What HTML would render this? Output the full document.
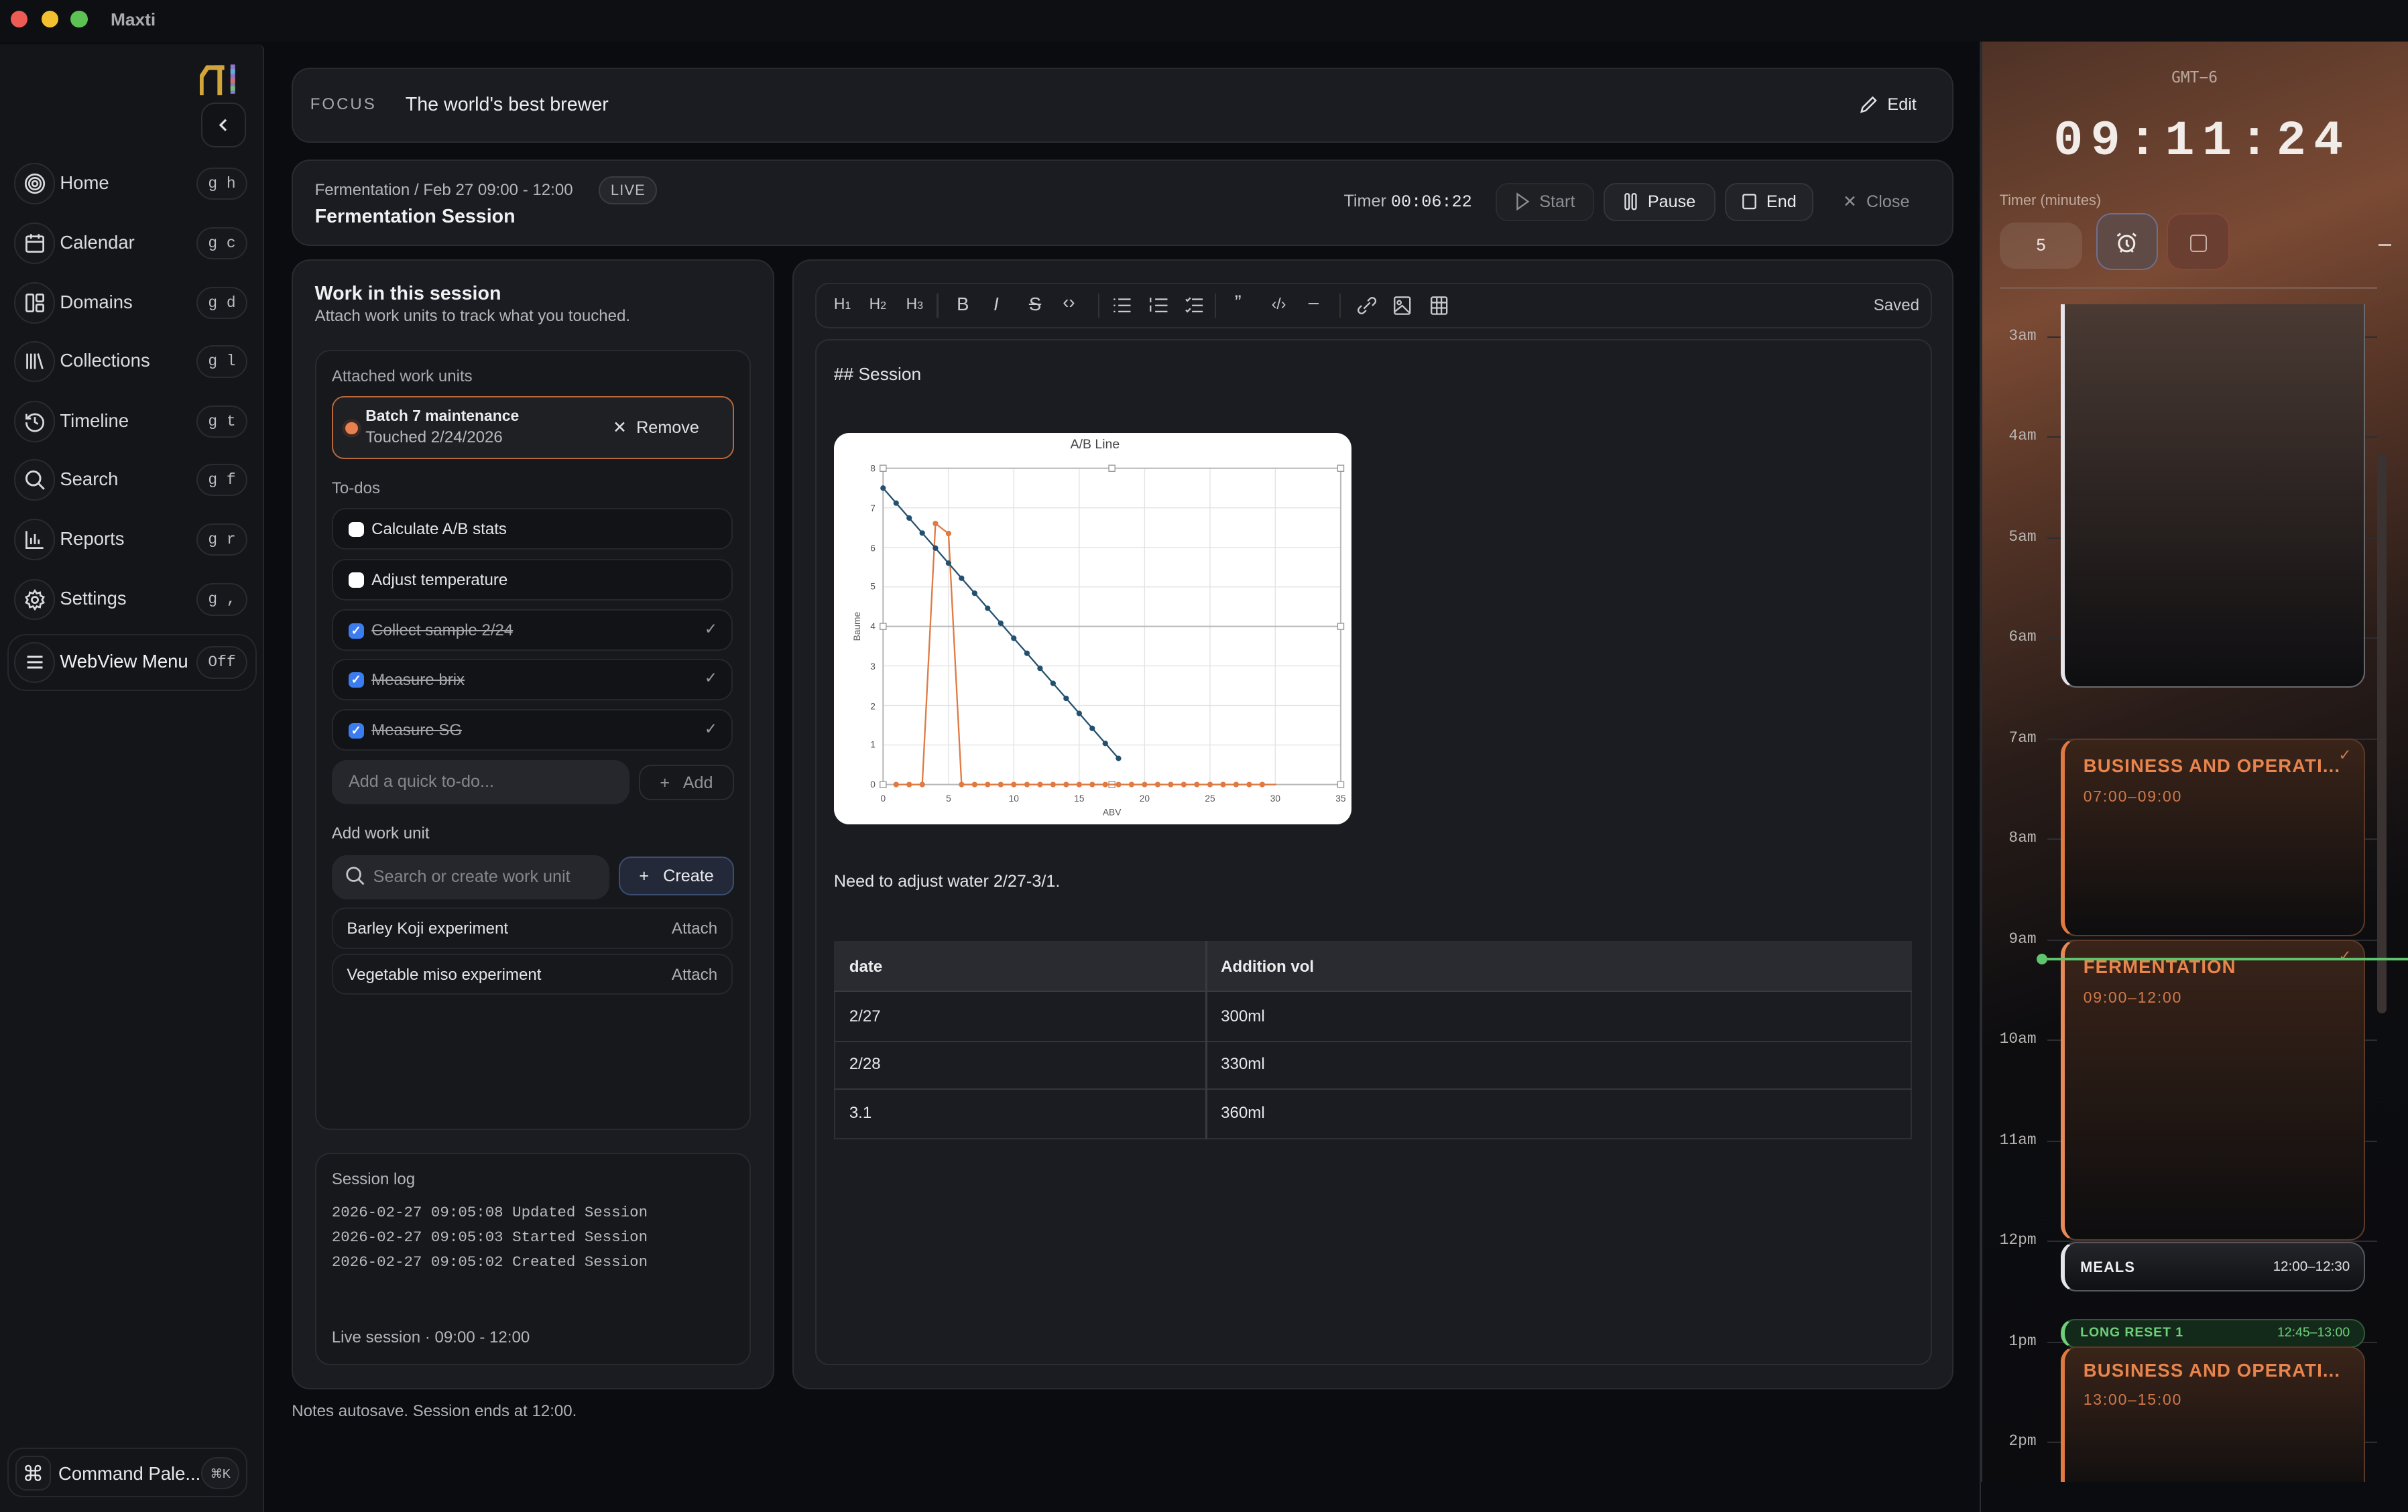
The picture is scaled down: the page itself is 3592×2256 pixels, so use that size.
<!DOCTYPE html>
<html><head><meta charset="utf-8"><style>
*{box-sizing:border-box;margin:0;padding:0}
html,body{width:3592px;height:2256px;overflow:hidden;background:#0b0c0f}
#r{width:1568px;height:985px;zoom:2.2908;position:relative;background:#0b0c0f;font-family:"Liberation Sans",sans-serif;color:#e7e7ea;font-size:11px;overflow:hidden}
.a{position:absolute}
.card{position:absolute;background:#1b1c21;border:1px solid #2a2b31;border-radius:12px}
.mono{font-family:"Liberation Mono",monospace}
.muted{color:#9b9ca2}
.nav{position:absolute;left:9px;width:152px;height:30px}
.nav .ic{position:absolute;left:0;top:1px;width:27px;height:27px;border:1px solid #2a2b30;border-radius:50%;background:#17181c;display:flex;align-items:center;justify-content:center}
.nav .lb{position:absolute;left:30px;top:7px;font-size:12px;color:#dcdce0}
.nav .kb{position:absolute;right:0;top:4px;width:33px;height:21px;border:1px solid #2a2b30;border-radius:11px;font-family:"Liberation Mono",monospace;font-size:10px;color:#bcbcc2;text-align:center;line-height:20px;background:#17181c}
svg{display:block}
.row{position:absolute;left:216px;width:261px;height:27px;border:1px solid #26272c;border-radius:9px;background:#121317}
.cb{position:absolute;left:10px;top:8px;width:10px;height:10px;border-radius:3px;background:#fff;color:#fff;font-size:8px;line-height:10px;text-align:center;font-weight:bold}
.cbd{background:#3b7cf0}
.rt{position:absolute;left:25px;top:7px;font-size:10.5px;color:#e5e5e8}
.done{color:#a5a5aa;text-decoration:line-through}
.btn{position:absolute;border:1px solid #33343a;border-radius:8px;background:#222328;font-size:11px;display:flex;align-items:center;justify-content:center;gap:6px}
.tb{position:absolute;top:192px;font-size:10px;color:#c9c9ce}
.hr{position:absolute;left:1308px;font-family:"Liberation Mono",monospace;font-size:10px;color:#b8b5b2}
.hl{position:absolute;left:1333px;width:215px;height:1px;background:#2d2d31}
.ev{position:absolute;left:1342px;width:198px;border:1px solid #5a3a28;border-left:3px solid #e07a40;border-radius:10px;background:linear-gradient(#3a2419,#0e0d0f)}
.evt{position:absolute;left:12px;font-weight:bold;color:#e8844c;font-size:12px;letter-spacing:.5px;white-space:nowrap}
.evs{position:absolute;left:12px;color:#d2784a;font-size:10px;letter-spacing:.8px}
</style></head><body><div id="r">
<div class="a" style="left:0;top:0;width:1568px;height:27px;background:#0e0f12"></div>
<div class="a" style="left:7px;top:7px;width:11px;height:11px;border-radius:50%;background:#ee5b55"></div>
<div class="a" style="left:27px;top:7px;width:11px;height:11px;border-radius:50%;background:#f3c02f"></div>
<div class="a" style="left:46px;top:7px;width:11px;height:11px;border-radius:50%;background:#5bc253"></div>
<div class="a" style="left:72px;top:6px;font-size:11.5px;color:#a9a9ae;font-weight:bold">Maxti</div>
<div class="a" style="left:0;top:29px;width:172px;height:956px;background:#141519;border-right:1px solid #26272c;border-top-right-radius:4px"></div>
<svg class="a" style="left:130px;top:41px" width="30" height="22" viewBox="0 0 30 22"><path d="M1 21V9l4-6h10" stroke="#d2a53a" stroke-width="3" fill="none"/><path d="M10 3h6M13 3v18" stroke="#d2a53a" stroke-width="3" fill="none"/><rect x="20" y="1" width="3" height="19" fill="#8c7ad0"/><rect x="20" y="4" width="3" height="3" fill="#5fb0d0"/><rect x="20" y="10" width="3" height="3" fill="#d07070"/><rect x="20" y="15" width="3" height="3" fill="#70c070"/></svg>
<div class="a" style="left:131px;top:67px;width:29px;height:29px;border:1px solid #2c2d32;border-radius:9px;background:#121317"></div>
<svg class="a" style="left:140px;top:76px" width="11" height="11" viewBox="0 0 11 11"><path d="M7 2L3.5 5.5 7 9" stroke="#e0e0e4" stroke-width="1.4" fill="none"/></svg>

<div class="nav" style="top:105px"><div class="ic"><svg width="14" height="14" viewBox="0 0 14 14" fill="none" stroke="#d8d8dc" stroke-width="1.2"><circle cx="7" cy="7" r="6"/><circle cx="7" cy="7" r="3.8"/><circle cx="7" cy="7" r="1.7"/></svg></div><div class="lb">Home</div><div class="kb">g h</div></div>
<div class="nav" style="top:144px"><div class="ic"><svg width="14" height="14" viewBox="0 0 14 14" fill="none" stroke="#d8d8dc" stroke-width="1.2"><rect x="1.5" y="2.5" width="11" height="10" rx="1"/><path d="M1.5 6h11M4.5 1v3M9.5 1v3"/></svg></div><div class="lb">Calendar</div><div class="kb">g c</div></div>
<div class="nav" style="top:183px"><div class="ic"><svg width="14" height="14" viewBox="0 0 14 14" fill="none" stroke="#d8d8dc" stroke-width="1.2"><rect x="1.5" y="1.5" width="4.5" height="11" rx=".8"/><rect x="8" y="1.5" width="4.5" height="4.5" rx=".8"/><rect x="8" y="8" width="4.5" height="4.5" rx=".8"/></svg></div><div class="lb">Domains</div><div class="kb">g d</div></div>
<div class="nav" style="top:221px"><div class="ic"><svg width="14" height="14" viewBox="0 0 14 14" fill="none" stroke="#d8d8dc" stroke-width="1.2"><path d="M2 2v10M4.5 2v10M7 2v10M9 2l3 10"/></svg></div><div class="lb">Collections</div><div class="kb">g l</div></div>
<div class="nav" style="top:260px"><div class="ic"><svg width="14" height="14" viewBox="0 0 14 14" fill="none" stroke="#d8d8dc" stroke-width="1.2"><path d="M2.2 5A5.5 5.5 0 1 1 1.5 7.5M1.5 2v3h3M7 4v3.3l2 1.3"/></svg></div><div class="lb">Timeline</div><div class="kb">g t</div></div>
<div class="nav" style="top:298px"><div class="ic"><svg width="14" height="14" viewBox="0 0 14 14" fill="none" stroke="#d8d8dc" stroke-width="1.3"><circle cx="6" cy="6" r="4.5"/><path d="M9.5 9.5L13 13"/></svg></div><div class="lb">Search</div><div class="kb">g f</div></div>
<div class="nav" style="top:337px"><div class="ic"><svg width="14" height="14" viewBox="0 0 14 14" fill="none" stroke="#d8d8dc" stroke-width="1.2"><path d="M1.5 1.5v11h11M4.5 10V6M7 10V3.5M9.5 10V7"/></svg></div><div class="lb">Reports</div><div class="kb">g r</div></div>
<div class="nav" style="top:376px"><div class="ic"><svg width="14" height="14" viewBox="0 0 14 14" fill="none" stroke="#d8d8dc" stroke-width="1.2"><circle cx="7" cy="7" r="2"/><path d="M7 1l1.2 1.8 2.1-.6.4 2.1 2 .9-1 1.8 1 1.8-2 .9-.4 2.1-2.1-.6L7 13l-1.2-1.8-2.1.6-.4-2.1-2-.9 1-1.8-1-1.8 2-.9.4-2.1 2.1.6z"/></svg></div><div class="lb">Settings</div><div class="kb">g ,</div></div>
<div class="a" style="left:5px;top:413px;width:162px;height:37px;border:1px solid #26272c;border-radius:12px"></div>
<div class="nav" style="top:417px"><div class="ic"><svg width="14" height="14" viewBox="0 0 14 14" fill="none" stroke="#e0e0e4" stroke-width="1.3"><path d="M2 3.5h10M2 7h10M2 10.5h10"/></svg></div><div class="lb" style="color:#f0f0f2">WebView Menu</div><div class="kb">Off</div></div>
<div class="a" style="left:5px;top:943px;width:156px;height:32px;border:1px solid #26272c;border-radius:10px"></div>
<div class="a" style="left:10px;top:948px;width:23px;height:23px;border:1px solid #2a2b30;border-radius:7px;background:#17181c;text-align:center;line-height:22px;font-size:14px;color:#e6e6ea">⌘</div>
<div class="a" style="left:38px;top:953px;font-size:12px;color:#e6e6ea">Command Pale...</div>
<div class="a" style="left:131px;top:949px;width:25px;height:21px;border:1px solid #2a2b30;border-radius:11px;background:#1b1c20;font-size:8px;color:#bcbcc2;text-align:center;line-height:20px">⌘K</div>

<div class="card" style="left:190px;top:44px;width:1082px;height:49px"></div>
<div class="a" style="left:202px;top:62px;font-size:10.5px;letter-spacing:1.3px;color:#a7a8ad">FOCUS</div>
<div class="a" style="left:264px;top:61px;font-size:12.5px;color:#ececef">The world's best brewer</div>
<svg class="a" style="left:1211px;top:62px" width="12" height="12" viewBox="0 0 12 12" fill="none" stroke="#e0e0e4" stroke-width="1.1"><path d="M8.5 1.5l2 2L4 10l-2.8.8L2 8z"/></svg>
<div class="a" style="left:1229px;top:62px;font-size:11px">Edit</div>

<div class="card" style="left:190px;top:104px;width:1082px;height:56px"></div>
<div class="a" style="left:205px;top:118px;font-size:10.5px;color:#b5b6bb">Fermentation / Feb 27 09:00 - 12:00</div>
<div class="a" style="left:390px;top:115px;width:38px;height:18px;border:1px solid #3a3b40;border-radius:9px;background:#26272c;font-size:9.5px;color:#bcbdc2;text-align:center;line-height:17px;letter-spacing:.5px">LIVE</div>
<div class="a" style="left:205px;top:134px;font-size:12.5px;font-weight:bold;color:#f0f0f2">Fermentation Session</div>
<div class="a" style="left:875px;top:125px;font-size:11px;color:#bdbdc2">Timer <span class="mono" style="color:#e8e8ea">00:06:22</span></div>
<div class="btn" style="left:974px;top:119px;width:64px;height:25px;color:#8e8f94;background:#1f2024;border-color:#2a2b30"><svg width="10" height="12" viewBox="0 0 10 12" fill="none" stroke="#8e8f94"><path d="M1.5 1v10L8.5 6z"/></svg>Start</div>
<div class="btn" style="left:1044px;top:119px;width:73px;height:25px;color:#ececee"><svg width="10" height="12" viewBox="0 0 10 12" fill="none" stroke="#e0e0e4"><rect x="1.5" y="1" width="2.5" height="10" rx="1"/><rect x="6" y="1" width="2.5" height="10" rx="1"/></svg>Pause</div>
<div class="btn" style="left:1123px;top:119px;width:58px;height:25px;color:#ececee"><svg width="10" height="12" viewBox="0 0 10 12" fill="none" stroke="#e0e0e4"><rect x="1" y="1.5" width="8" height="9" rx="1"/></svg>End</div>
<div class="a" style="left:1200px;top:125px;font-size:11px;color:#8e8f94">✕&nbsp;&nbsp;Close</div>

<div class="card" style="left:190px;top:169px;width:314px;height:736px"></div>
<div class="a" style="left:205px;top:184px;font-size:12.5px;font-weight:bold;color:#f0f0f2">Work in this session</div>
<div class="a" style="left:205px;top:200px;font-size:10.5px;color:#b5b6bb">Attach work units to track what you touched.</div>
<div class="a" style="left:205px;top:228px;width:284px;height:508px;border:1px solid #292a2f;border-radius:10px;background:#17181c"></div>
<div class="a" style="left:216px;top:239px;font-size:10.5px;color:#a9aaaf">Attached work units</div>
<div class="a" style="left:216px;top:258px;width:262px;height:41px;border:1px solid #b8683c;border-radius:8px;background:#1f2024"></div>
<div class="a" style="left:225px;top:275px;width:8px;height:8px;border-radius:50%;background:#e88050;box-shadow:0 0 0 2px #3a2a24"></div>
<div class="a" style="left:238px;top:265px;font-size:10px;font-weight:bold;color:#ececef">Batch 7 maintenance</div>
<div class="a" style="left:238px;top:279px;font-size:10.5px;color:#b9b9be">Touched 2/24/2026</div>
<div class="a" style="left:399px;top:272px;font-size:11px;color:#e0e0e4">✕&nbsp;&nbsp;Remove</div>
<div class="a" style="left:216px;top:312px;font-size:10.5px;color:#a9aaaf">To-dos</div>
<div class="row" style="top:331px"><div class="cb"></div><div class="rt">Calculate A/B stats</div></div>
<div class="row" style="top:364px"><div class="cb"></div><div class="rt">Adjust temperature</div></div>
<div class="row" style="top:397px"><div class="cb cbd">✓</div><div class="rt done">Collect sample 2/24</div><div class="a muted" style="right:9px;top:6px;font-size:10px">✓</div></div>
<div class="row" style="top:429px"><div class="cb cbd">✓</div><div class="rt done">Measure brix</div><div class="a muted" style="right:9px;top:6px;font-size:10px">✓</div></div>
<div class="row" style="top:462px"><div class="cb cbd">✓</div><div class="rt done">Measure SG</div><div class="a muted" style="right:9px;top:6px;font-size:10px">✓</div></div>
<div class="a" style="left:216px;top:495px;width:194px;height:29px;border-radius:10px;background:#26272c;font-size:11px;color:#85868b;padding:8px 11px">Add a quick to-do...</div>
<div class="a" style="left:416px;top:498px;width:62px;height:23px;border:1px solid #2c2d32;border-radius:8px;font-size:11px;color:#909196;text-align:center;line-height:22px">+&nbsp;&nbsp; Add</div>
<div class="a" style="left:216px;top:537px;font-size:10.5px;color:#c2c3c7">Add work unit</div>
<div class="a" style="left:216px;top:557px;width:181px;height:29px;border-radius:10px;background:#26272c;font-size:11px;color:#85868b;padding:8px 0 0 27px;white-space:nowrap;overflow:hidden">Search or create work unit</div>
<svg class="a" style="left:225px;top:564px" width="13" height="13" viewBox="0 0 13 13" fill="none" stroke="#c5c5ca" stroke-width="1.2"><circle cx="5.5" cy="5.5" r="4.3"/><path d="M8.7 8.7L12 12"/></svg>
<div class="a" style="left:403px;top:558px;width:75px;height:25px;border:1px solid #3c4d72;border-radius:8px;background:#232938;font-size:11px;color:#ececef;text-align:center;line-height:24px">+&nbsp;&nbsp; Create</div>
<div class="row" style="top:591px;background:#17181c"><div class="rt" style="left:9px;font-size:10.5px">Barley Koji experiment</div><div class="a muted" style="right:9px;top:7px;font-size:10.5px;color:#b0b1b6">Attach</div></div>
<div class="row" style="top:621px;background:#17181c"><div class="rt" style="left:9px;font-size:10.5px">Vegetable miso experiment</div><div class="a muted" style="right:9px;top:7px;font-size:10.5px;color:#b0b1b6">Attach</div></div>
<div class="a" style="left:205px;top:751px;width:284px;height:138px;border:1px solid #292a2f;border-radius:10px;background:#17181c"></div>
<div class="a" style="left:216px;top:762px;font-size:10.5px;color:#b5b6bb">Session log</div>
<div class="a mono" style="left:216px;top:782px;font-size:9.8px;line-height:16px;color:#b9b9be">2026-02-27 09:05:08 Updated Session<br>2026-02-27 09:05:03 Started Session<br>2026-02-27 09:05:02 Created Session</div>
<div class="a" style="left:216px;top:865px;font-size:10.5px;color:#b5b6bb">Live session · 09:00 - 12:00</div>
<div class="a" style="left:190px;top:913px;font-size:10.5px;color:#b0b1b6">Notes autosave. Session ends at 12:00.</div>

<div class="card" style="left:516px;top:169px;width:756px;height:736px"></div>
<div class="a" style="left:531px;top:184px;width:727px;height:30px;border:1px solid #2c2d32;border-radius:9px"></div>
<div class="tb" style="left:543px">H<small style="font-size:7px">1</small></div>
<div class="tb" style="left:566px">H<small style="font-size:7px">2</small></div>
<div class="tb" style="left:590px">H<small style="font-size:7px">3</small></div>
<div class="a" style="left:610px;top:191px;width:1px;height:16px;background:#333"></div>
<div class="tb" style="left:623px;font-size:12px;top:191px">B</div>
<div class="tb" style="left:647px;font-size:12px;top:191px;font-style:italic">I</div>
<div class="tb" style="left:670px;font-size:12px;top:191px;text-decoration:line-through">S</div>
<div class="tb" style="left:692px;font-size:12px;top:190px">‹›</div>
<div class="a" style="left:715px;top:191px;width:1px;height:16px;background:#333"></div>
<svg class="a" style="left:724px;top:193px" width="60" height="12" viewBox="0 0 60 12" fill="none" stroke="#c9c9ce" stroke-width="1"><path d="M4 2h8M4 6h8M4 10h8M1 2h1M1 6h1M1 10h1M28 2h8M28 6h8M28 10h8M25 1v3M25 6v4M52 2h7M52 6h7M52 10h7M48 2l1 1 2-2M48 9l1 1 2-2"/></svg>
<div class="a" style="left:791px;top:191px;width:1px;height:16px;background:#333"></div>
<div class="tb" style="left:804px;font-size:13px;top:190px">”</div>
<div class="tb" style="left:828px;top:192px">‹/›</div>
<div class="tb" style="left:852px;top:190px;font-size:12px">–</div>
<div class="a" style="left:872px;top:191px;width:1px;height:16px;background:#333"></div>
<svg class="a" style="left:883px;top:192px" width="60" height="14" viewBox="0 0 60 14" fill="none" stroke="#c9c9ce" stroke-width="1"><path d="M5 9l4-4M3.5 7L2 8.5a2.1 2.1 0 003 3L6.5 10M7.5 4L9 2.5a2.1 2.1 0 013 3L10.5 7"/><rect x="25" y="1.5" width="10" height="11" rx="1"/><circle cx="28" cy="5" r="1.2"/><path d="M25 11l5-4 5 5"/><rect x="49" y="1.5" width="10" height="11" rx="1"/><path d="M49 5h10M49 8.5h10M52.5 1.5v11M55.5 1.5v11"/></svg>
<div class="a" style="left:1220px;top:193px;font-size:10.5px;color:#c9c9ce">Saved</div>
<div class="a" style="left:531px;top:221px;width:727px;height:668px;border:1px solid #2c2d32;border-radius:9px"></div>
<div class="a" style="left:543px;top:237px;font-size:11.5px;color:#e4e4e8">## Session</div>
<svg class="a" style="left:543px;top:282px" width="337" height="255" viewBox="0 0 337 255">
<rect width="337" height="255" rx="10" fill="#fff"/>
<text x="170" y="10" font-size="8.5" fill="#444" text-anchor="middle" font-family="Liberation Sans">A/B Line</text>
<g stroke="#e3e3e3" stroke-width=".6"><path d="M74.6 23V229M117.1 23V229M159.7 23V229M202.3 23V229M244.9 23V229M287.4 23V229M32 203.25H330M32 177.5H330M32 151.75H330M32 100.25H330M32 74.5H330M32 48.75H330"/></g>
<g stroke="#b8b8b8" stroke-width=".9" fill="none"><rect x="32" y="23" width="298" height="206"/><path d="M32 126H330"/></g>
<g fill="#fff" stroke="#999" stroke-width=".6"><rect x="30" y="21" width="4" height="4"/><rect x="179" y="21" width="4" height="4"/><rect x="328" y="21" width="4" height="4"/><rect x="30" y="124" width="4" height="4"/><rect x="328" y="124" width="4" height="4"/><rect x="30" y="227" width="4" height="4"/><rect x="179" y="227" width="4" height="4"/><rect x="328" y="227" width="4" height="4"/></g>
<g font-size="6" fill="#555" font-family="Liberation Sans" text-anchor="end"><text x="27" y="231">0</text><text x="27" y="205">1</text><text x="27" y="180">2</text><text x="27" y="154">3</text><text x="27" y="128">4</text><text x="27" y="102">5</text><text x="27" y="77">6</text><text x="27" y="51">7</text><text x="27" y="25">8</text></g>
<g font-size="6" fill="#555" font-family="Liberation Sans" text-anchor="middle"><text x="32" y="240">0</text><text x="74.6" y="240">5</text><text x="117.1" y="240">10</text><text x="159.7" y="240">15</text><text x="202.3" y="240">20</text><text x="244.9" y="240">25</text><text x="287.4" y="240">30</text><text x="330" y="240">35</text><text x="181" y="249">ABV</text></g>
<text x="17" y="126" font-size="6" fill="#555" font-family="Liberation Sans" text-anchor="middle" transform="rotate(-90 17 126)">Baume</text>
<polyline fill="none" stroke="#e07a42" stroke-width="1" points="40.5,229 49,229 57.5,229 66.1,59 74.6,65.5 83.1,229 288,229"/>
<g fill="#e07a42"><circle cx="40.5" cy="229" r="1.8"/><circle cx="49" cy="229" r="1.8"/><circle cx="57.5" cy="229" r="1.8"/><circle cx="66.1" cy="59" r="1.8"/><circle cx="74.6" cy="65.5" r="1.8"/><circle cx="83.1" cy="229" r="1.8"/><circle cx="91.6" cy="229" r="1.8"/><circle cx="100.1" cy="229" r="1.8"/><circle cx="108.6" cy="229" r="1.8"/><circle cx="117.1" cy="229" r="1.8"/><circle cx="125.7" cy="229" r="1.8"/><circle cx="134.2" cy="229" r="1.8"/><circle cx="142.7" cy="229" r="1.8"/><circle cx="151.2" cy="229" r="1.8"/><circle cx="159.7" cy="229" r="1.8"/><circle cx="168.2" cy="229" r="1.8"/><circle cx="176.7" cy="229" r="1.8"/><circle cx="185.3" cy="229" r="1.8"/><circle cx="193.8" cy="229" r="1.8"/><circle cx="202.3" cy="229" r="1.8"/><circle cx="210.8" cy="229" r="1.8"/><circle cx="219.3" cy="229" r="1.8"/><circle cx="227.8" cy="229" r="1.8"/><circle cx="236.3" cy="229" r="1.8"/><circle cx="244.9" cy="229" r="1.8"/><circle cx="253.4" cy="229" r="1.8"/><circle cx="261.9" cy="229" r="1.8"/><circle cx="270.4" cy="229" r="1.8"/><circle cx="278.9" cy="229" r="1.8"/></g>
<polyline fill="none" stroke="#23506e" stroke-width="1" points="32,35.9 185.3,212"/>
<g fill="#23506e"><circle cx="32" cy="35.9" r="1.8"/><circle cx="40.5" cy="45.7" r="1.8"/><circle cx="49" cy="55.4" r="1.8"/><circle cx="57.5" cy="65.2" r="1.8"/><circle cx="66.1" cy="75" r="1.8"/><circle cx="74.6" cy="84.8" r="1.8"/><circle cx="83.1" cy="94.6" r="1.8"/><circle cx="91.6" cy="104.4" r="1.8"/><circle cx="100.1" cy="114.2" r="1.8"/><circle cx="108.6" cy="123.9" r="1.8"/><circle cx="117.1" cy="133.7" r="1.8"/><circle cx="125.7" cy="143.5" r="1.8"/><circle cx="134.2" cy="153.3" r="1.8"/><circle cx="142.7" cy="163.1" r="1.8"/><circle cx="151.2" cy="172.9" r="1.8"/><circle cx="159.7" cy="182.7" r="1.8"/><circle cx="168.2" cy="192.4" r="1.8"/><circle cx="176.7" cy="202.2" r="1.8"/><circle cx="185.3" cy="212" r="1.8"/></g>
</svg>
<div class="a" style="left:543px;top:568px;font-size:11px;color:#e4e4e8">Need to adjust water 2/27-3/1.</div>
<div class="a" style="left:543px;top:613px;width:702px;height:129px;border:1px solid #2e2f34"></div>
<div class="a" style="left:543px;top:613px;width:702px;height:33px;background:#2a2b30;border-bottom:1px solid #3a3b40"></div>
<div class="a" style="left:543px;top:678px;width:702px;height:1px;background:#35363b"></div>
<div class="a" style="left:543px;top:709px;width:702px;height:1px;background:#35363b"></div>
<div class="a" style="left:785px;top:613px;width:1px;height:129px;background:#3a3b40"></div>
<div class="a" style="left:553px;top:624px;font-size:10.5px;font-weight:bold;color:#ececef">date</div>
<div class="a" style="left:795px;top:624px;font-size:10.5px;font-weight:bold;color:#ececef">Addition vol</div>
<div class="a" style="left:553px;top:656px;font-size:10.5px">2/27</div><div class="a" style="left:795px;top:656px;font-size:10.5px">300ml</div>
<div class="a" style="left:553px;top:687px;font-size:10.5px">2/28</div><div class="a" style="left:795px;top:687px;font-size:10.5px">330ml</div>
<div class="a" style="left:553px;top:719px;font-size:10.5px">3.1</div><div class="a" style="left:795px;top:719px;font-size:10.5px">360ml</div>

<div class="a" style="left:1289px;top:27px;width:279px;height:958px;border-left:2px solid #2a2c33;background:linear-gradient(160deg,#4e3226 0%,#7a4a34 18%,#5a3728 28%,#2a1d19 45%,#0d0d10 62%,#0b0c0f 100%)"></div>
<div class="a" style="left:1290px;top:45px;width:278px;text-align:center;font-size:10px;color:#b9a69c;font-family:'DejaVu Sans Mono',monospace">GMT−6</div>
<div class="a" style="left:1295px;top:74px;width:278px;text-align:center;font-size:32px;font-weight:bold;color:#f1ece8;font-family:'Liberation Mono',monospace;letter-spacing:5px">09:11:24</div>
<div class="a" style="left:1302px;top:125px;font-size:9.5px;color:#bfa89c">Timer (minutes)</div>
<div class="a" style="left:1302px;top:145px;width:54px;height:30px;border-radius:10px;background:rgba(255,255,255,.09);text-align:center;line-height:30px;font-size:11px;color:#f0ece8">5</div>
<div class="a" style="left:1365px;top:139px;width:40px;height:37px;border-radius:10px;background:#5f4a45;border:1px solid #6e6f90"></div>
<svg class="a" style="left:1377px;top:150px" width="16" height="16" viewBox="0 0 16 16" fill="none" stroke="#f0ece8" stroke-width="1.3"><circle cx="8" cy="8.5" r="5"/><path d="M8 6v3l1.5 1.5M2 3.5L4 2M14 3.5L12 2M4 14l1-1.5M12 14l-1-1.5"/></svg>
<div class="a" style="left:1411px;top:139px;width:41px;height:37px;border-radius:10px;background:#6a3e30;border:1px solid #86463a"></div>
<div class="a" style="left:1426px;top:153px;width:11px;height:11px;border:1.3px solid #c8b0a6;border-radius:2px"></div>
<div class="a" style="left:1549px;top:159px;width:8px;height:1px;background:#d0c0b8"></div>
<div class="a" style="left:1302px;top:187px;width:246px;height:1px;background:#7a5a4c"></div>
<div class="a" style="left:1548px;top:295px;width:6px;height:365px;border-radius:3px;background:#3a3331"></div>
<div class="hl" style="top:219px"></div><div class="hr" style="top:213px">3am</div>
<div class="hl" style="top:284px"></div><div class="hr" style="top:278px">4am</div>
<div class="hl" style="top:350px"></div><div class="hr" style="top:344px">5am</div>
<div class="hl" style="top:415px"></div><div class="hr" style="top:409px">6am</div>
<div class="hl" style="top:481px"></div><div class="hr" style="top:475px">7am</div>
<div class="hl" style="top:546px"></div><div class="hr" style="top:540px">8am</div>
<div class="hl" style="top:612px"></div><div class="hr" style="top:606px">9am</div>
<div class="hl" style="top:677px"></div><div class="hr" style="top:671px;left:1302px">10am</div>
<div class="hl" style="top:743px"></div><div class="hr" style="top:737px;left:1302px">11am</div>
<div class="hl" style="top:808px"></div><div class="hr" style="top:802px;left:1302px">12pm</div>
<div class="hl" style="top:874px"></div><div class="hr" style="top:868px">1pm</div>
<div class="hl" style="top:939px"></div><div class="hr" style="top:933px">2pm</div>
<div class="a" style="left:1342px;top:198px;width:198px;height:250px;border:1px solid #6a6a6e;border-top:none;border-left:3px solid #e4e4ea;border-radius:0 0 10px 10px;background:linear-gradient(#4a3a33,#0e0e11)"></div>
<div class="ev" style="top:481px;height:129px"><div class="evt" style="top:10px">BUSINESS AND OPERATI...</div><div class="evs" style="top:31px">07:00–09:00</div><div class="a" style="right:8px;top:4px;color:#c87a50;font-size:10px">✓</div></div>
<div class="ev" style="top:612px;height:196px;border-left-color:#e88a58"><div class="evt" style="top:10px">FERMENTATION</div><div class="evs" style="top:31px">09:00–12:00</div><div class="a" style="right:8px;top:4px;color:#c87a50;font-size:10px">✓</div></div>
<div class="a" style="left:1342px;top:809px;width:198px;height:32px;border:1px solid #55575c;border-left:3px solid #e4e4ea;border-radius:10px;background:linear-gradient(#24252a,#101114)"><div class="a" style="left:10px;top:10px;font-size:9.5px;font-weight:bold;color:#f0f0f2;letter-spacing:.5px">MEALS</div><div class="a" style="right:9px;top:10px;font-size:9px;color:#e0e0e4">12:00–12:30</div></div>
<div class="a" style="left:1342px;top:859px;width:198px;height:19px;border:1px solid #2f5a3a;border-left:3px solid #6fcf7a;border-radius:9px;background:#132a1a"><div class="a" style="left:10px;top:3px;font-size:8.5px;font-weight:bold;color:#6fd07a;letter-spacing:.4px">LONG RESET 1</div><div class="a" style="right:9px;top:3px;font-size:8.5px;color:#6fd07a">12:45–13:00</div></div>
<div class="ev" style="top:877px;height:100px;border-bottom:none;border-radius:10px 10px 0 0"><div class="evt" style="top:8px">BUSINESS AND OPERATI...</div><div class="evs" style="top:28px">13:00–15:00</div></div>
<div class="a" style="left:1290px;top:965px;width:278px;height:20px;background:#0b0c0f"></div>
<div class="a" style="left:1333px;top:624px;width:235px;height:1.5px;background:#5fc46e"></div>
<div class="a" style="left:1326px;top:621px;width:7px;height:7px;border-radius:50%;background:#5fc46e"></div>
</div></body></html>
